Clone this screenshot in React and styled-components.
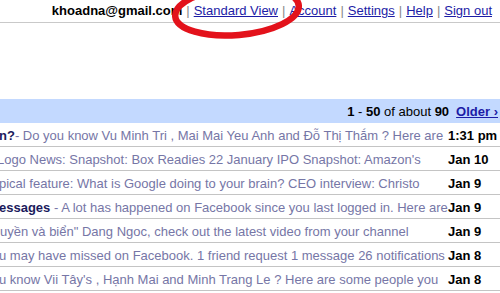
import React from "react";
import styled, { createGlobalStyle } from "styled-components";

const GlobalStyle = createGlobalStyle`
  html, body { margin: 0; padding: 0; background: #fff; }
  body { font-family: "Liberation Sans", Arial, sans-serif; font-size: 13px; color: #000; }
`;

const Page = styled.div`
  position: relative;
  width: 500px;
  height: 293px;
  overflow: hidden;
`;

const TopBar = styled.div`
  height: 23px;
  box-sizing: border-box;
  border-bottom: 1px solid #c9c9c9;
  display: flex;
  justify-content: flex-end;
  align-items: center;
  padding: 0 8px 1px 0;
  white-space: nowrap;
`;

const Email = styled.b`
  font-weight: bold;
  color: #000;
`;

const Sep = styled.span`
  color: #888;
  padding: 0 4px;
`;

const TopLink = styled.a`
  color: #1c1ca6;
  text-decoration: underline;
  cursor: pointer;
`;

const ListHeader = styled.div`
  margin-top: 76px;
  height: 24px;
  background: #c3d9ff;
  display: flex;
  justify-content: flex-end;
  align-items: center;
  gap: 7px;
  padding-right: 2px;
  white-space: nowrap;
`;

const Count = styled.span`
  color: #000;
`;

const OlderLink = styled.a`
  color: #1c1ca6;
  font-weight: bold;
  text-decoration: underline;
`;

const List = styled.div`
  display: flex;
  flex-direction: column;
`;

const Row = styled.div`
  height: 24px;
  box-sizing: border-box;
  border-bottom: 1px solid #c4c4c4;
  display: flex;
  align-items: center;
  padding-top: 1px;
`;

const Subject = styled.div`
  flex: 1;
  min-width: 0;
  overflow: hidden;
  white-space: nowrap;
  padding-right: 5px;
  text-indent: ${(p) => p.$shift}px;
`;

const Title = styled.b`
  color: #1a1a5c;
  font-weight: bold;
`;

const Snippet = styled.span`
  color: #7676a6;
`;

const DateCell = styled.div`
  width: 52px;
  flex: none;
  font-weight: bold;
  color: #000;
  white-space: nowrap;
`;

const Annotation = styled.svg`
  position: absolute;
  left: 0;
  top: 0;
  pointer-events: none;
`;

const rows = [
  { title: "n?", snippet: "- Do you know Vu Minh Tri , Mai Mai Yeu Anh and Đỗ Thị Thắm ? Here are", date: "1:31 pm", shift: -1 },
  { snippet: "Logo News: Snapshot: Box Readies 22 January IPO Snapshot: Amazon's", date: "Jan 10", shift: -3 },
  { snippet: "pical feature: What is Google doing to your brain? CEO interview: Christo", date: "Jan 9", shift: -1 },
  { title: "essages", snippet: " - A lot has happened on Facebook since you last logged in. Here are", date: "Jan 9", shift: -1 },
  { snippet: "uyền và biển\" Dang Ngoc, check out the latest video from your channel", date: "Jan 9", shift: 0 },
  { snippet: "u may have missed on Facebook. 1 friend request 1 message 26 notifications", date: "Jan 8", shift: -1 },
  { snippet: "u know Vii Tây's , Hạnh Mai and Minh Trang Le ? Here are some people you", date: "Jan 8", shift: -1 },
];

export default function App() {
  return (
    <>
      <GlobalStyle />
      <Page>
        <TopBar>
          <Email>khoadna@gmail.com</Email>
          <Sep>|</Sep>
          <TopLink>Standard View</TopLink>
          <Sep>|</Sep>
          <TopLink>Account</TopLink>
          <Sep>|</Sep>
          <TopLink>Settings</TopLink>
          <Sep>|</Sep>
          <TopLink>Help</TopLink>
          <Sep>|</Sep>
          <TopLink>Sign out</TopLink>
        </TopBar>
        <ListHeader>
          <Count>
            <b>1</b> - <b>50</b> of about <b>90</b>
          </Count>
          <OlderLink>Older ›</OlderLink>
        </ListHeader>
        <List>
          {rows.map((r, i) => (
            <Row key={i}>
              <Subject $shift={r.shift}>
                {r.title && <Title>{r.title}</Title>}
                <Snippet>{r.snippet}</Snippet>
              </Subject>
              <DateCell>{r.date}</DateCell>
            </Row>
          ))}
        </List>
        <Annotation width="500" height="60" viewBox="0 0 500 60">
          <ellipse
            cx="237"
            cy="11"
            rx="62"
            ry="24"
            fill="none"
            stroke="#e3121b"
            strokeWidth="6.5"
            transform="rotate(-5 237 11)"
          />
        </Annotation>
      </Page>
    </>
  );
}
